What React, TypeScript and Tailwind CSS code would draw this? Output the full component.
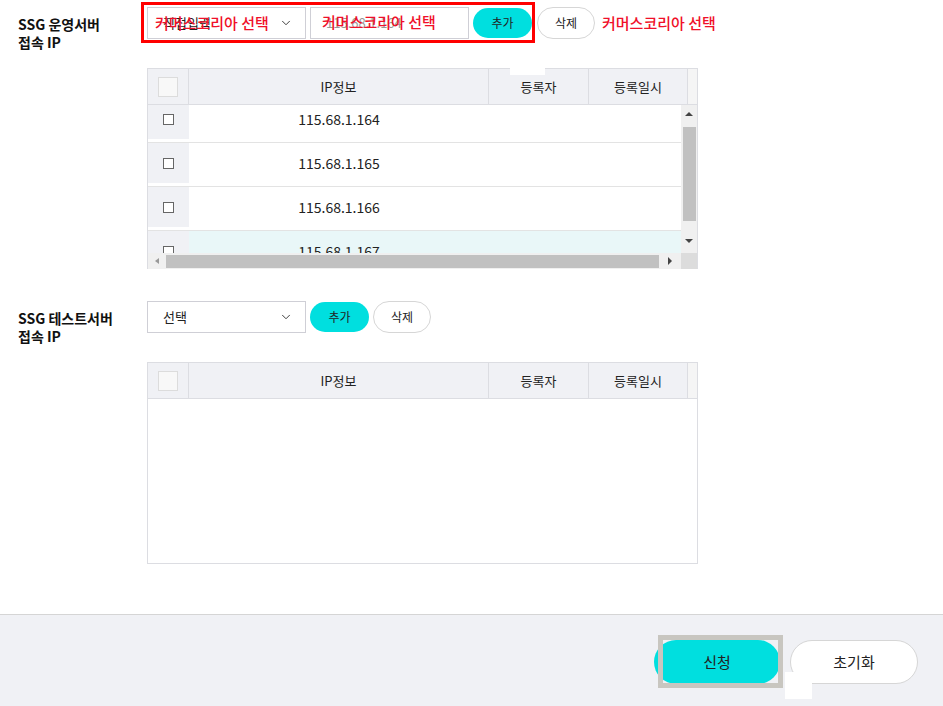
import { ChevronDown } from "lucide-react";

const ips = ["115.68.1.164", "115.68.1.165", "115.68.1.166", "115.68.1.167"];

function Select({ label, overlay }: { label: string; overlay?: boolean }) {
  return (
    <div className="relative flex h-[32px] w-[159px] items-center justify-between border border-[#cfcfd6] bg-white pl-[15px] pr-[12px] text-[13px] text-[#222]">
      <span>{label}</span>
      <ChevronDown className="h-[14px] w-[14px] text-[#333]" strokeWidth={1.6} />
      {overlay && (
        <span className="absolute left-[7px] top-[4px] text-[15px] font-medium text-[#f0102a]">
          커머스코리아 선택
        </span>
      )}
    </div>
  );
}

function AddButton() {
  return (
    <button className="flex h-[30px] w-[59px] items-center justify-center rounded-full bg-[#00dfdf] text-[12px] text-[#222]">
      추가
    </button>
  );
}

function DeleteButton() {
  return (
    <button className="flex h-[32px] w-[58px] items-center justify-center rounded-full border border-[#d6d6d6] bg-white text-[12px] text-[#222]">
      삭제
    </button>
  );
}

function TableHeader() {
  return (
    <div className="flex h-[36px] border-b border-[#dcdde2] text-[13px] text-[#222]">
      <div className="flex w-[41px] items-center justify-center border-r border-[#dcdde2] bg-[#f0f1f5]">
        <div className="h-[20px] w-[20px] border border-[#dcdcdc] bg-[#f8f8f8]" />
      </div>
      <div className="flex w-[300px] items-center justify-center border-r border-[#dcdde2] bg-[#f0f1f5]">IP정보</div>
      <div className="flex w-[100px] items-center justify-center border-r border-[#dcdde2] bg-[#f0f1f5]">등록자</div>
      <div className="flex w-[99px] items-center justify-center border-r border-[#dcdde2] bg-[#f0f1f5]">등록일시</div>
      <div className="flex-1 bg-[#f5f5f5]" />
    </div>
  );
}

function Label({ lines }: { lines: string[] }) {
  return (
    <div className="w-[147px] pl-[18px] pt-[8px] text-[14px] font-bold leading-[18px] text-[#111]">
      {lines.map((l) => (
        <div key={l}>{l}</div>
      ))}
    </div>
  );
}

export default function App() {
  return (
    <div className="flex h-[706px] w-[943px] flex-col bg-white font-['Noto_Sans_CJK_KR','Noto_Sans',sans-serif]">
      <div className="flex-1 pt-[7px]">
        {/* 운영서버 */}
        <div className="flex">
          <Label lines={["SSG 운영서버", "접속 IP"]} />
          <div className="flex flex-col">
            <div className="relative flex items-center gap-[4px]">
              <div className="pointer-events-none absolute left-[-6px] top-[-5px] h-[41px] w-[394px] border-[3px] border-[#f00]" />
              <Select label="직접입력" overlay />
              <div className="relative flex h-[32px] w-[159px] items-center border border-[#cfcfd6] bg-white pl-[15px] text-[13px] text-[#999]">
                115.68.1.164
                <span className="absolute left-[11px] top-[3px] text-[15px] font-medium text-[#f0102a]">
                  커머스코리아 선택
                </span>
              </div>
              <AddButton />
              <div className="ml-[1px]">
                <DeleteButton />
              </div>
              <span className="ml-[3px] text-[15px] font-medium text-[#f0102a]">커머스코리아 선택</span>
            </div>

            <div className="relative mt-[29px] h-[201px] w-[551px] border border-[#dcdde2]">
              <div className="absolute left-[362px] top-[-1px] h-[7px] w-[35px] bg-white" />
              <TableHeader />
              <div className="flex h-[164px]">
                <div className="flex w-[535px] flex-col">
                  <div className="h-[148px] overflow-hidden">
                    <div className="-mt-[6px]">
                      {ips.map((ip, i) => (
                        <div
                          key={ip}
                          className={`flex h-[44px] border-b border-[#e3e3e3] pb-[3px] text-[14px] text-[#222] ${i === 3 ? "bg-[#e9f7f8]" : "bg-white"}`}
                        >
                          <div className="flex w-[41px] items-center justify-center bg-[#f0f1f5]">
                            <div className="h-[11px] w-[11px] border border-[#666] bg-white" />
                          </div>
                          <div className="flex w-[300px] items-center justify-center">{ip}</div>
                          <div className="w-[100px]" />
                          <div className="flex-1" />
                        </div>
                      ))}
                    </div>
                  </div>
                  {/* horizontal scrollbar */}
                  <div className="flex h-[16px] items-center bg-[#f0f0f0]">
                    <div className="flex w-[18px] justify-center">
                      <div className="h-0 w-0 border-y-[3px] border-r-[4px] border-y-transparent border-r-[#999]" />
                    </div>
                    <div className="h-[13px] w-[493px] bg-[#c1c1c1]" />
                    <div className="flex flex-1 justify-center">
                      <div className="h-0 w-0 border-y-[4px] border-l-[4px] border-y-transparent border-l-[#444]" />
                    </div>
                  </div>
                </div>
                {/* vertical scrollbar */}
                <div className="flex w-[16px] flex-col">
                  <div className="flex h-[148px] flex-col items-center bg-[#f0f0f0]">
                    <div className="mt-[7px] h-0 w-0 border-x-[4px] border-b-[4px] border-x-transparent border-b-[#444]" />
                    <div className="mt-[11px] h-[94px] w-[13px] bg-[#c1c1c1]" />
                    <div className="mt-[18px] h-0 w-0 border-x-[4px] border-t-[4px] border-x-transparent border-t-[#444]" />
                  </div>
                  <div className="h-[16px] bg-[#dcdcdc]" />
                </div>
              </div>
            </div>
          </div>
        </div>

        {/* 테스트서버 */}
        <div className="mt-[32px] flex">
          <Label lines={["SSG 테스트서버", "접속 IP"]} />
          <div className="flex flex-col">
            <div className="flex items-center gap-[4px]">
              <Select label="선택" />
              <AddButton />
              <DeleteButton />
            </div>
            <div className="mt-[29px] h-[202px] w-[551px] border border-[#dcdde2] bg-white">
              <TableHeader />
            </div>
          </div>
        </div>
      </div>

      {/* footer */}
      <div className="relative flex h-[92px] items-start justify-end gap-[10px] border-t border-[#d5d5d5] bg-[#f0f1f5] pr-[25px] pt-[25px]">
        <div className="relative">
          <button className="flex h-[44px] w-[126px] items-center justify-center rounded-full bg-[#00dfdf] text-[15px] text-[#222]">
            신청
          </button>
          <div className="pointer-events-none absolute left-[4px] top-[-5px] h-[53px] w-[125px] border-[5px] border-[#c8c6c0]" />
        </div>
        <button className="flex h-[44px] w-[128px] items-center justify-center rounded-full border border-[#d6d6d6] bg-white text-[15px] text-[#222]">
          초기화
        </button>
        <div className="absolute left-[785px] top-[57px] h-[27px] w-[27px] bg-white" />
      </div>
    </div>
  );
}
